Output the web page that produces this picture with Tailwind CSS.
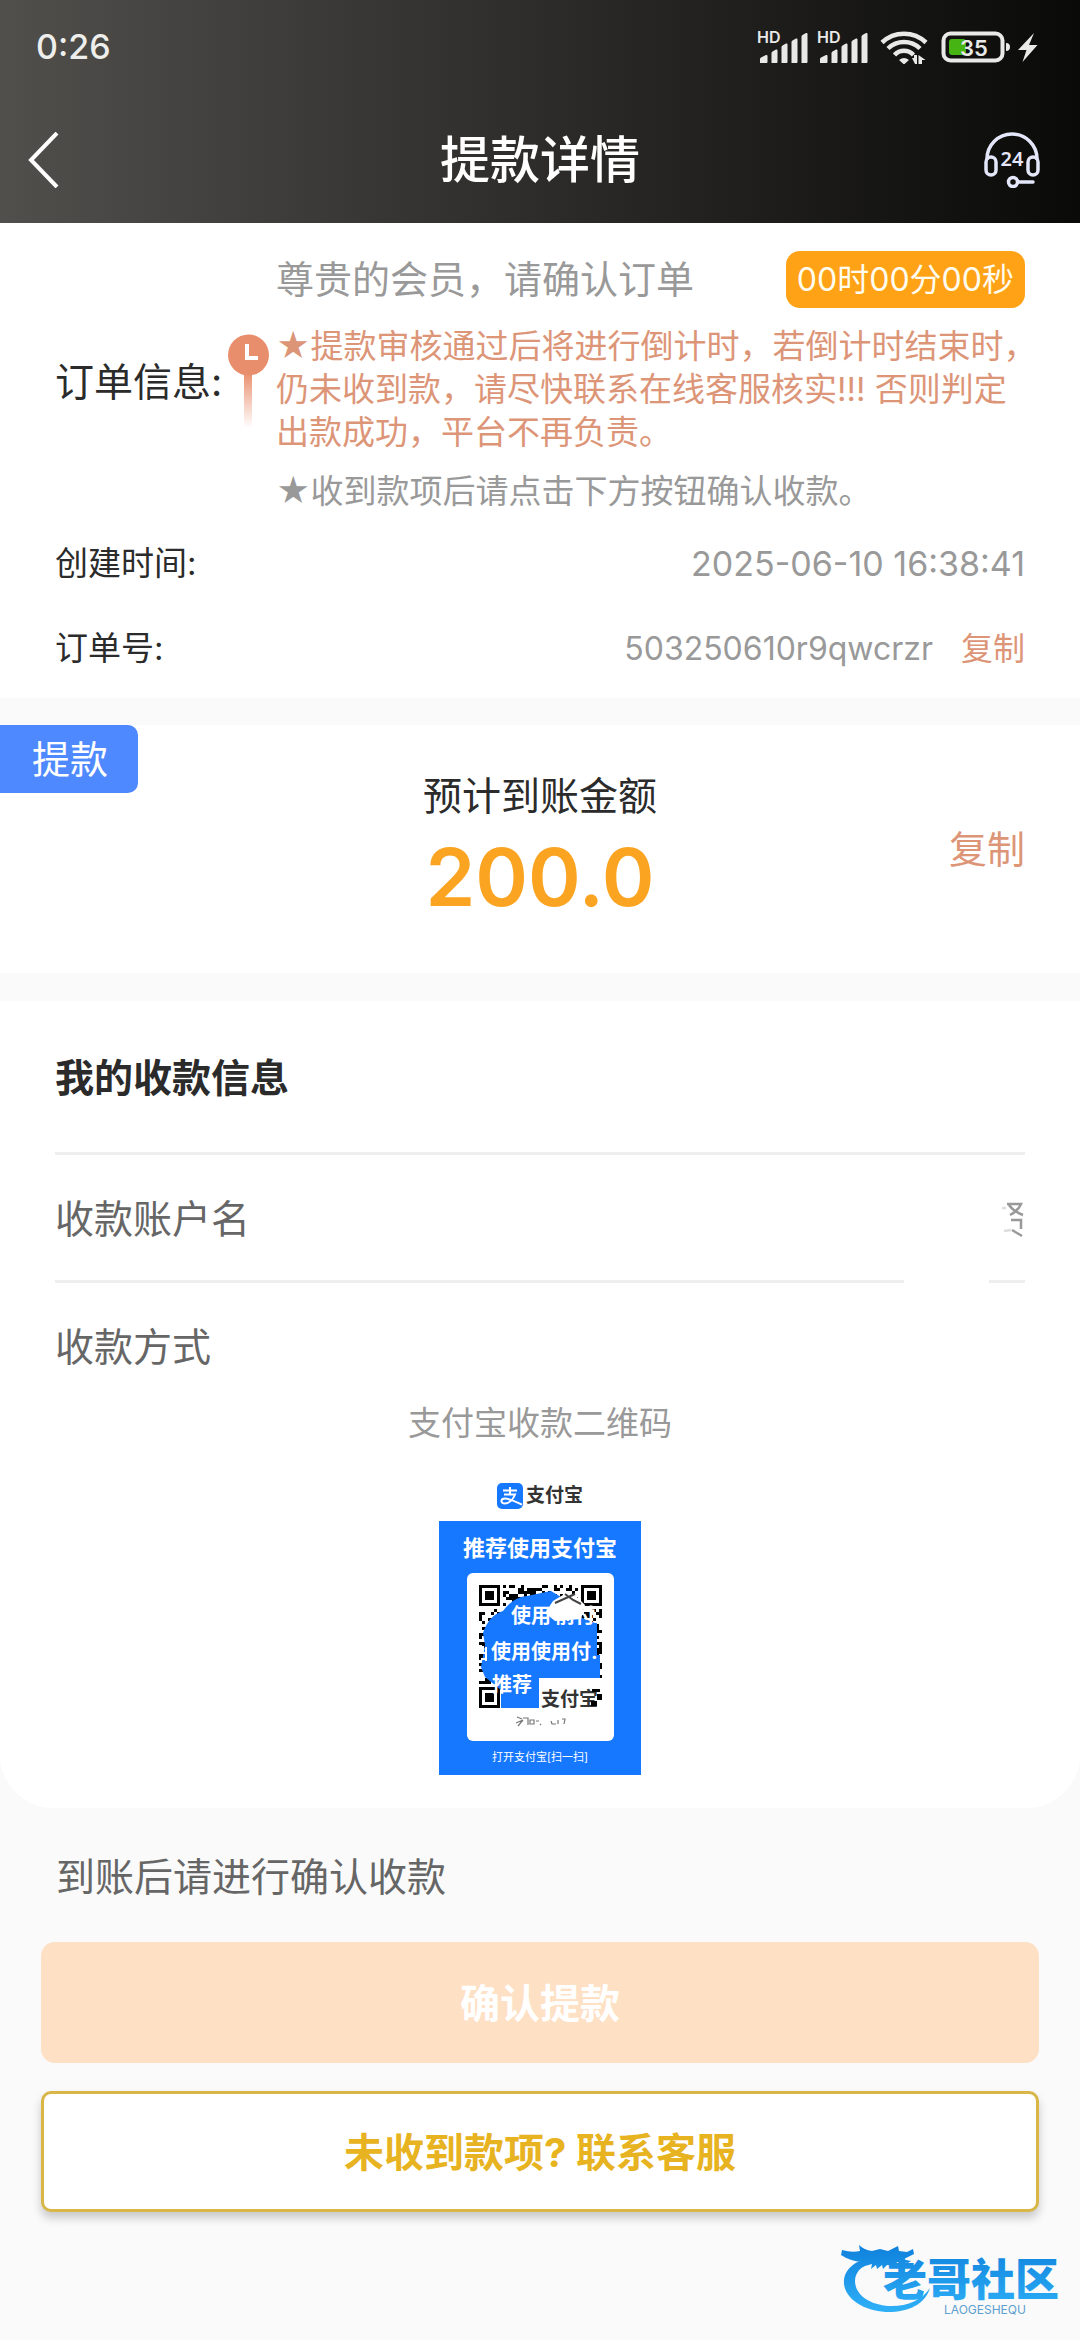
<!DOCTYPE html>
<html lang="zh-CN">

<head>
  <meta charset="UTF-8">
  <meta name="viewport" content="width=device-width, initial-scale=1.0">
  <title>提款详情</title>
  <script src="https://cdn.jsdelivr.net/npm/@tailwindcss/browser@4"></script>
</head>

<body class="bg-[#fafafa] min-h-screen font-['Inter','Noto_Sans_CJK_SC',sans-serif] text-[#2b2b2b]">
  <!-- Header -->
  <header class="bg-linear-to-r from-[#504f4c] via-[#2d2c2a] to-[#0a0a08] text-white">
    <!-- Status bar -->
    <div class="h-24 pb-1 pl-9 pr-10 flex items-center justify-between text-[#eeeeec]">
      <span class="text-[34px] font-medium">0:26</span>
      <svg class="w-[284px] h-9" viewBox="756 26 284 36" fill="#e9e9e7" aria-hidden="true">
        <g id="signal">
          <text x="757" y="41" font-size="16" font-weight="600">HD</text>
          <path d="M760 61v-4q0-1 1-1.500l5-2.500q1.500-.5 1.500 1v6q0 1-1 1zM771.500 61v-10q0-1 1-1.500l3.500-2q1.500-.5 1.500 1v11.500q0 1-1 1zM781.500 61v-16q0-1 1-1.500l3.500-2q1.500-.5 1.500 1v17.500q0 1-1 1zM791.500 61v-21q0-1 1-1.500l3.500-2q1.500-.5 1.500 1v22.500q0 1-1 1zM801.500 61v-26.500q0-1 1-1.500l3.500-2q1.500-.5 1.500 1v28q0 1-1 1z" />
        </g>
        <use href="#signal" x="60" />
        <g fill="none" stroke="#e9e9e7" stroke-width="4.500">
          <path d="M882 40.500a32 32 0 0 1 44 0" />
          <path d="M888 46.500a23 23 0 0 1 32 0" />
          <path d="M894.500 53a13 13 0 0 1 19 0" />
        </g>
        <path d="M899 58a8 8 0 0 1 10 0l-5 4.500zM912 56h2v-3h3v9h-2zM918.500 62v-9l7 5h-3.500v4z" />
        <rect x="943.500" y="31.500" width="59" height="27" rx="7" fill="none" stroke="#e9e9e7" stroke-width="4" />
        <rect x="949" y="37" width="17" height="16" rx="3" fill="#46b413" />
        <text x="974" y="54" font-size="22" font-weight="600" text-anchor="middle">35</text>
        <path d="M1006 41q4 0 4 4t-4 4zM1034 31l-16 17h8.500l-4 12 15-17h-8.500z" />
      </svg>
    </div>
    <!-- Title bar -->
    <div class="h-[127px] px-7 grid grid-cols-[1fr_auto_1fr] items-center">
      <a href="#" aria-label="返回" class="justify-self-start">
        <svg class="w-8 h-14" viewBox="0 0 32 56" fill="none" stroke="#fff" stroke-width="4">
          <path d="M29 1L3 28l26 27" />
        </svg>
      </a>
      <h1 class="text-[50px] leading-[60px] font-medium">提款详情</h1>
      <a href="#" aria-label="在线客服" class="justify-self-end mr-3">
        <svg class="w-14 h-14" viewBox="0 0 56 56" fill="none" stroke="#e4e6fa" stroke-width="3.500">
          <path d="M3 28v-1a25 25 0 0 1 50 0v1" />
          <rect x="2" y="25" width="10" height="18" rx="5" />
          <rect x="44" y="25" width="10" height="18" rx="5" />
          <circle cx="29" cy="50" r="4.500" />
          <path d="M34 50h15" stroke-linecap="round" />
          <text x="28" y="34" font-size="20" font-weight="600" text-anchor="middle" fill="#e4e6fa" stroke="none" font-family="Noto Sans, sans-serif">24</text>
        </svg>
      </a>
    </div>
  </header>

  <main>
    <!-- Order info -->
    <section class="bg-white px-[55px] pt-7 pb-[7px]">
      <div class="flex items-center">
        <h2 class="w-[173px] shrink-0 text-[39px] leading-[46px] whitespace-nowrap">订单信息:</h2>
        <svg class="w-[41px] h-24 shrink-0 self-start mt-[83px]" viewBox="0 0 41 96" aria-hidden="true">
          <defs>
            <linearGradient id="stem" x1="0" y1="0" x2="0" y2="1">
              <stop offset="0" stop-color="#e98e6c" />
              <stop offset="1" stop-color="#e98e6c" stop-opacity="0" />
            </linearGradient>
          </defs>
          <rect x="16" y="38" width="8" height="56" fill="url(#stem)" />
          <circle cx="20.500" cy="21" r="20.500" fill="#e98e6c" />
          <path d="M19 10v14h11" fill="none" stroke="#fff" stroke-width="4" />
        </svg>
        <div class="ml-[7px] grow min-w-0 text-[33px] leading-[43px] whitespace-nowrap">
          <div class="h-[57px] flex items-center justify-between">
            <span class="text-[38px] text-[#999]">尊贵的会员，请确认订单</span>
            <span class="h-[57px] px-[11px] flex items-center rounded-[14px] bg-[#ffa216] text-[32px] text-[#fffdf0]">00时00分00秒</span>
          </div>
          <p class="mt-[17px] text-[#dd9578]">★提款审核通过后将进行倒计时，若倒计时结束时，<br>仍未收到款，请尽快联系在线客服核实!!! 否则判定<br>出款成功，平台不再负责。</p>
          <p class="mt-4 text-[#999]">★收到款项后请点击下方按钮确认收款。</p>
        </div>
      </div>
      <dl class="mt-2 text-[33px]">
        <div class="h-[85px] flex items-center justify-between">
          <dt>创建时间:</dt>
          <dd class="text-[34px] text-[#999]">2025-06-10 16:38:41</dd>
        </div>
        <div class="h-[85px] flex items-center justify-between">
          <dt>订单号:</dt>
          <dd class="flex items-center gap-7 text-[32px] text-[#999]">503250610r9qwcrzr <button type="button" class="text-[#dd9578]">复制</button></dd>
        </div>
      </dl>
    </section>

    <!-- Amount -->
    <section class="mt-[27px] bg-white grid grid-cols-[1fr_auto_1fr] items-center">
      <span class="self-start justify-self-start h-[68px] pl-8 pr-[30px] flex items-center rounded-r-[10px] bg-[#4f89ff] text-white text-[38px]">提款</span>
      <div class="pt-12 pb-[38px] text-center">
        <p class="text-[39px] leading-[46px]">预计到账金额</p>
        <p class="text-[80px] leading-[116px] font-semibold text-[#fba422]">200.0</p>
      </div>
      <button type="button" class="justify-self-end mr-[55px] text-[38px] text-[#dd9578]">复制</button>
    </section>

    <!-- Payee info -->
    <section class="mt-7 bg-white rounded-b-[53px] px-[55px] pb-[33px] text-[39px] text-[#666]">
      <h2 class="h-[154px] pt-1 flex items-center border-b-3 border-[#eee] font-bold text-[#2b2b2b]">我的收款信息</h2>
      <div class="relative h-32 pt-1 flex items-center justify-between border-b-3 border-[#eee]">
        <span>收款账户名</span>
        <svg class="w-6 h-9" viewBox="0 0 24 36" fill="none" stroke="#999" stroke-width="2.500" aria-hidden="true">
          <path d="M6 2h14q-3 7-11 11M8 3q4 6 14 10M10 18h10v9M11 28l10 6" />
          <path d="M1 6h4M3 29l7-1" stroke="#ddd" />
        </svg>
        <div class="absolute -bottom-1 right-9 w-[85px] h-5 bg-white"></div>
      </div>
      <div class="h-32 flex items-center">收款方式</div>
      <p class="text-[33px] leading-6 text-center text-[#999]">支付宝收款二维码</p>

      <figure class="mt-12 mx-auto w-[202px] text-center">
        <figcaption class="h-[26px] flex items-center justify-center gap-[3px] text-[19px] font-bold text-[#333]">
          <svg class="w-[26px] h-[26px]" viewBox="0 0 26 26" aria-hidden="true">
            <rect width="26" height="26" rx="5" fill="#1677ff" />
            <path d="M6 7.500h14M13 4v7M7 11.500h11c-2 5-6 9-10 9-5 0-4.500-5 0-5 4 0 8 2 17 6" fill="none" stroke="#fff" stroke-width="2" />
          </svg>
          支付宝
        </figcaption>
        <div class="mt-3 h-[254px] pt-3 bg-[#1677ff] text-white">
          <p class="text-[22px] leading-[30px] font-bold">推荐使用支付宝</p>
          <div class="mt-[10px] mx-auto w-[147px] h-[168px] p-3 rounded-md bg-white">
            <svg class="w-[123px] h-[148px]" viewBox="0 0 123 148" font-weight="700">
              <g id="qr" fill="#000"></g>
              <path d="M24 26q10-14 24-15l24-5 10 6 4 14 30 12h2v32h3v25H60v28H22v-18L6 92 2 82l4-22-2-12q6-18 20-22z" fill="#1677ff" />
              <path d="M60 93h63v30H60z" fill="#fff" />
              <path d="M74 16l10-6 14 2 8 8-4 14-26 2-10-8z" fill="#fff" />
              <path d="M76 18l20-9M86 9l8 6 8 4" stroke="#444" stroke-width="2" />
              <g fill="#fff" font-size="20">
                <text x="32" y="38">使用</text>
                <text x="76" y="38">前付</text>
                <text x="12" y="74">使用使用付.</text>
                <text x="13" y="107">推荐</text>
              </g>
              <path d="M1 62h4M0 68h8M2 74h5M7 62v14" stroke="#fff" stroke-width="2" />
              <text x="62" y="121" font-size="19" fill="#333">支付宝</text>
              <path d="M113 104h8v3h-8zM118 109h5v6h-5zM112 116h6v5h-6z" fill="#000" />
              <path d="M38 132l5 2M37 138l7-3-5 6M44 133h5v7M51 135h4v4h-4zM57 136h3M61 139l1 1M72 136l1 3h4M79 135v4M83 134h3l-1 5" fill="none" stroke="#777" stroke-width="1.200" />
            </svg>
          </div>
          <p class="text-[11px] leading-8">打开支付宝[扫一扫]</p>
        </div>
      </figure>
    </section>

    <!-- Actions -->
    <section class="px-[41px] pt-[46px]">
      <p class="px-[15px] text-[39px] leading-[46px] text-[#666]">到账后请进行确认收款</p>
      <button type="button" disabled class="mt-[42px] w-full h-[121px] pt-[2px] rounded-[14px] bg-[#fee0c5] text-[40px] font-bold text-white">确认提款</button>
      <button type="button" class="mt-7 w-full h-[121px] pt-[2px] rounded-[10px] border-3 border-[#d9b648] bg-white shadow-[0_6px_10px_rgba(0,0,0,0.2)] text-[40px] font-bold text-[#e7b321]">未收到款项? 联系客服</button>
    </section>
  </main>

  <!-- Community logo -->
  <footer class="mt-6 pr-3 flex justify-end">
    <svg class="w-[228px] h-[84px]" viewBox="0 0 228 84" role="img" aria-label="老哥社区">
      <defs>
        <linearGradient id="blue" gradientUnits="userSpaceOnUse" x1="0" y1="8" x2="0" y2="78">
          <stop offset="0" stop-color="#0f80dc" />
          <stop offset="1" stop-color="#2fb2f8" />
        </linearGradient>
      </defs>
      <g fill="url(#blue)">
        <path d="M36 20C14 24 3 34 4 48c2 18 26 29 48 28 20-1 34-10 38-24-8 12-22 18-38 18C32 70 15 60 15 45c0-10 9-18 23-21z" />
        <path d="M2 14q10 3 18 1l-1-6q5 5 13 6l8-2 8 2 10-5 1 5 8 1 6-3 1 5-8 4-5 1 10 2-3 2-11-1-1 4-9-1-4 4-1-4-5 4-1-4-5 4 1-5-7 2-10 5 7-9q-12-1-21-7z" />
        <text x="43" y="60" font-size="44" font-weight="900">老哥社区</text>
      </g>
      <text x="104" y="78" font-size="12" fill="#5c9fd0">LAOGESHEQU</text>
    </svg>
  </footer>

  <script>
    // 41 x 41 modules, 3px each
    const qr = document.getElementById("qr");
    let seed = 7;

    function random() {
      seed = (seed * 16807) % 2147483647;
      return seed / 2147483647;
    }

    function addRect(x, y, w, h, color) {
      const rect = document.createElementNS("http://www.w3.org/2000/svg", "rect");
      rect.setAttribute("x", x * 3);
      rect.setAttribute("y", y * 3);
      rect.setAttribute("width", w * 3);
      rect.setAttribute("height", h * 3);
      if (color) rect.setAttribute("fill", color);
      qr.appendChild(rect);
    }

    for (let y = 0; y < 41; y++) {
      for (let x = 0; x < 41; x++) {
        const inFinder = (x < 8 && y < 8) || (x > 32 && y < 8) || (x < 8 && y > 32);
        if (!inFinder && random() < 0.5) addRect(x, y, 1, 1);
      }
    }

    [[0, 0], [34, 0], [0, 34]].forEach(([x, y]) => {
      addRect(x, y, 7, 7);
      addRect(x + 1, y + 1, 5, 5, "#fff");
      addRect(x + 2, y + 2, 3, 3);
    });
  </script>
</body>

</html>
